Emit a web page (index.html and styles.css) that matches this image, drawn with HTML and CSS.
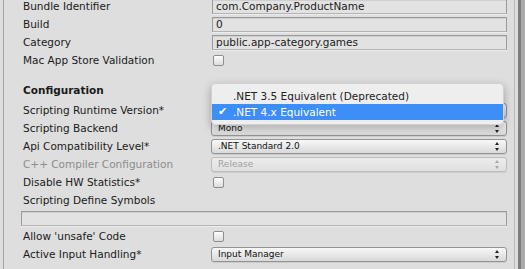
FILE: index.html
```html
<!DOCTYPE html>
<html lang="en">
<head>
  <meta charset="UTF-8">
  <title>Player Settings</title>
  <link rel="stylesheet" href="styles.css">
</head>
<body>

  <div class="inspector">
    <div class="panel">
      <div class="row">
        <span class="label">Bundle Identifier</span>
        <div class="field">com.Company.ProductName</div>
      </div>
      <div class="row">
        <span class="label">Build</span>
        <div class="field">0</div>
      </div>
      <div class="row">
        <span class="label">Category</span>
        <div class="field">public.app-category.games</div>
      </div>
      <div class="row">
        <span class="label">Mac App Store Validation</span>
        <div class="toggle"></div>
      </div>

      <div class="header">Configuration</div>

      <!-- popup is covered by the open menu below -->
      <div class="row">
        <span class="label">Scripting Runtime Version*</span>
        <div class="popup"><span></span><i class="arrows"></i></div>
      </div>
      <div class="row">
        <span class="label">Scripting Backend</span>
        <div class="popup"><span>Mono</span><i class="arrows"></i></div>
      </div>
      <div class="row">
        <span class="label">Api Compatibility Level*</span>
        <div class="popup"><span>.NET Standard 2.0</span><i class="arrows"></i></div>
      </div>
      <div class="row disabled">
        <span class="label">C++ Compiler Configuration</span>
        <div class="popup"><span>Release</span><i class="arrows"></i></div>
      </div>
      <div class="row">
        <span class="label">Disable HW Statistics*</span>
        <div class="toggle"></div>
      </div>
      <div class="row">
        <span class="label">Scripting Define Symbols</span>
      </div>
      <div class="row">
        <div class="field wide"></div>
      </div>
      <div class="row">
        <span class="label">Allow 'unsafe' Code</span>
        <div class="toggle"></div>
      </div>
      <div class="row">
        <span class="label">Active Input Handling*</span>
        <div class="popup"><span>Input Manager</span><i class="arrows"></i></div>
      </div>
    </div>

    <div class="scrollbar"></div>
  </div>

  <!-- open popup menu for Scripting Runtime Version -->
  <ul class="menu">
    <li>.NET 3.5 Equivalent (Deprecated)</li>
    <li class="selected">.NET 4.x Equivalent</li>
  </ul>

</body>
</html>
```

FILE: styles.css
```css
* {
  margin: 0;
  padding: 0;
  box-sizing: border-box;
}

body {
  position: relative;
  width: 525px;
  height: 269px;
  overflow: hidden;
  background-color: #dedede;
  font-family: 'DejaVu Sans', sans-serif;
  font-size: 10.5px;
  color: #1a1a1a;
}

.inspector {
  display: flex;
  height: 100%;
}

/* Settings panel */
.panel {
  width: 508px;
  margin-left: 3px;
  margin-top: -3px;
  padding-left: 19px;
  border-left: 1px solid #a3a3a3;
}

.row {
  display: flex;
  align-items: center;
  height: 18px;
}

.label {
  flex: none;
  width: 189px;
  white-space: nowrap;
}

.header {
  height: 20px;
  margin-top: 12px;
  line-height: 18px;
  font-weight: bold;
}

.disabled .label {
  color: #8c8c8c;
}

/* Text fields */
.field {
  width: 295px;
  height: 15px;
  padding-left: 3px;
  line-height: 13px;
  background-color: #e2e2e2;
  border: 1px solid #9a9a9a;
  border-bottom-color: #b4b4b4;
  box-shadow: inset 0 1px 0 #cfcfcf, 0 1px 0 #ececec;
  white-space: nowrap;
}

.field.wide {
  width: 486px;
  margin-left: -2px;
}

/* Checkbox */
.toggle {
  width: 11px;
  height: 11px;
  margin-left: 1px;
  border: 1px solid #8e8e8e;
  border-radius: 2px;
  background: linear-gradient(#fdfdfd, #dcdcdc);
}

/* Popup buttons */
.popup {
  display: flex;
  align-items: center;
  justify-content: space-between;
  width: 296px;
  height: 15px;
  margin-left: -1px;
  padding: 0 6px 0 6px;
  font-size: 9px;
  color: #111;
  border: 1px solid #939393;
  border-radius: 3px;
  background: linear-gradient(#f8f8f8, #d9d9d9);
  box-shadow: 0 1px 0 rgba(0, 0, 0, 0.08);
}

.disabled .popup {
  color: #9e9e9e;
  border-color: #bdbdbd;
  background: linear-gradient(#ececec, #e0e0e0);
}

.arrows {
  position: relative;
  width: 5px;
  height: 9px;
}

.arrows::before,
.arrows::after {
  content: '';
  position: absolute;
  left: 0;
  border-left: 2.5px solid transparent;
  border-right: 2.5px solid transparent;
}

.arrows::before {
  top: 0;
  border-bottom: 3px solid #222;
}

.arrows::after {
  bottom: 0;
  border-top: 3px solid #222;
}

.disabled .arrows::before {
  border-bottom-color: #a8a8a8;
}

.disabled .arrows::after {
  border-top-color: #a8a8a8;
}

/* Right scrollbar strip */
.scrollbar {
  flex: 1;
  margin-left: 3px;
  border-left: 1px solid #b9b9b9;
  background: linear-gradient(to right, #dedede 0 3px, #7d7d7d 3px 6px, #a9a9a9 6px);
}

/* Drop-down menu */
.menu {
  position: absolute;
  left: 211px;
  top: 83px;
  width: 293px;
  padding: 4px 0;
  list-style: none;
  font-size: 10.5px;
  background-color: rgba(238, 238, 238, 0.97);
  border: 1px solid rgba(0, 0, 0, 0.12);
  border-radius: 5px;
  box-shadow: 0 3px 9px rgba(0, 0, 0, 0.3);
}

.menu li {
  position: relative;
  height: 16px;
  line-height: 16px;
  padding-left: 21px;
  color: #222;
}

.menu li.selected {
  background-color: #3d8ef6;
  color: #fff;
}

.menu li.selected::before {
  content: '\2714';
  position: absolute;
  left: 6px;
  font-size: 11px;
}
```
